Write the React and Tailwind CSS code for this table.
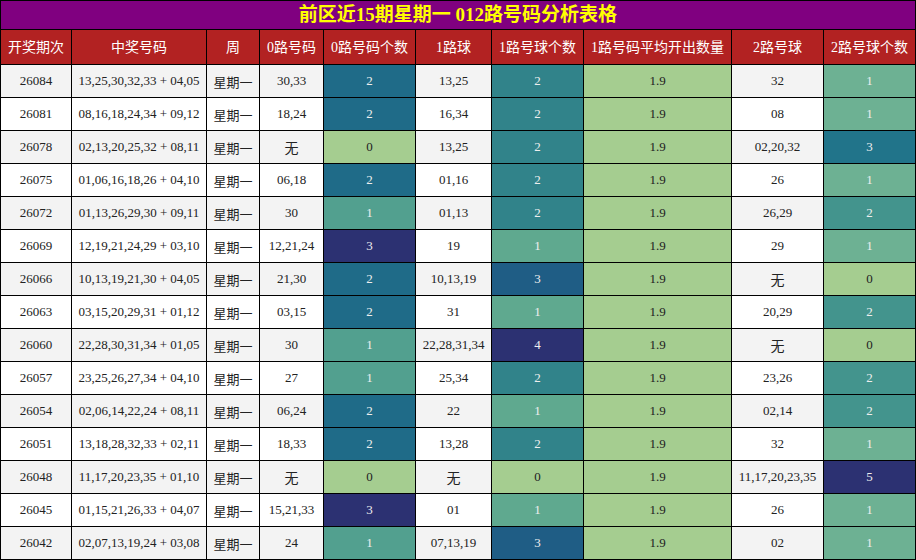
import React from 'react';

const rows = [
  ['26084', '13,25,30,32,33 + 04,05', '30,33', 2, '13,25', 2, '32', 1],
  ['26081', '08,16,18,24,34 + 09,12', '18,24', 2, '16,34', 2, '08', 1],
  ['26078', '02,13,20,25,32 + 08,11', '无', 0, '13,25', 2, '02,20,32', 3],
  ['26075', '01,06,16,18,26 + 04,10', '06,18', 2, '01,16', 2, '26', 1],
  ['26072', '01,13,26,29,30 + 09,11', '30', 1, '01,13', 2, '26,29', 2],
  ['26069', '12,19,21,24,29 + 03,10', '12,21,24', 3, '19', 1, '29', 1],
  ['26066', '10,13,19,21,30 + 04,05', '21,30', 2, '10,13,19', 3, '无', 0],
  ['26063', '03,15,20,29,31 + 01,12', '03,15', 2, '31', 1, '20,29', 2],
  ['26060', '22,28,30,31,34 + 01,05', '30', 1, '22,28,31,34', 4, '无', 0],
  ['26057', '23,25,26,27,34 + 04,10', '27', 1, '25,34', 2, '23,26', 2],
  ['26054', '02,06,14,22,24 + 08,11', '06,24', 2, '22', 1, '02,14', 2],
  ['26051', '13,18,28,32,33 + 02,11', '18,33', 2, '13,28', 2, '32', 1],
  ['26048', '11,17,20,23,35 + 01,10', '无', 0, '无', 0, '11,17,20,23,35', 5],
  ['26045', '01,15,21,26,33 + 04,07', '15,21,33', 3, '01', 1, '26', 1],
  ['26042', '02,07,13,19,24 + 03,08', '24', 1, '07,13,19', 3, '02', 1],
];

const headers = ['开奖期次', '中奖号码', '周', '0路号码', '0路号码个数', '1路球', '1路号球个数', '1路号码平均开出数量', '2路号球', '2路号球个数'];

// 每列单独的渐变色（浅绿 -> 深蓝）
const zero = 'bg-[#a5cd90] text-[#222]';
const heat0 = { 0: zero, 1: 'bg-[#52a08f] text-[#eee]', 2: 'bg-[#1f6b88] text-[#eee]', 3: 'bg-[#2c3172] text-[#eee]' };
const heat1 = { 0: zero, 1: 'bg-[#5fa98f] text-[#eee]', 2: 'bg-[#31838a] text-[#eee]', 3: 'bg-[#1f5d85] text-[#eee]', 4: 'bg-[#2c3172] text-[#eee]' };
const heat2 = { 0: zero, 1: 'bg-[#6db193] text-[#eee]', 2: 'bg-[#43948d] text-[#eee]', 3: 'bg-[#21748a] text-[#eee]', 5: 'bg-[#2c3172] text-[#eee]' };

const Cell = ({ className = '', children }) => (
  <div className={`flex items-center justify-center h-[32px] text-[13px] ${className}`}>{children}</div>
);

// "无" 比数字略低一点
const Text = ({ v }) => (v === '无' ? <span className="pt-[2px] text-[14px]">{v}</span> : v);

const App = () => {
  return (
    <div className="w-[916px] h-[560px] bg-black p-px font-['Liberation_Serif','Noto_Sans_CJK_SC',serif]">
      <div className="grid grid-cols-[70px_134px_52px_63px_91px_75px_91px_147px_91px_91px] gap-px">
        <div className="col-span-10 h-[28px] bg-[#800080] flex items-center justify-center text-[19px] font-bold text-[#ffff00]">
          前区近15期星期一 012路号码分析表格
        </div>
        {headers.map((h) => (
          <div key={h} className="h-[34px] bg-[#b22222] text-white text-[14px] flex items-center justify-center whitespace-nowrap">
            {h}
          </div>
        ))}
        {rows.map((r, i) => {
          const bg = i % 2 === 0 ? 'bg-[#f3f3f3]' : 'bg-white';
          const plain = `${bg} text-[#222]`;
          return (
            <React.Fragment key={r[0]}>
              <Cell className={plain}>{r[0]}</Cell>
              <Cell className={plain}>{r[1]}</Cell>
              <Cell className={`${plain} pt-[3px]`}>星期一</Cell>
              <Cell className={plain}><Text v={r[2]} /></Cell>
              <Cell className={heat0[r[3]]}>{r[3]}</Cell>
              <Cell className={plain}><Text v={r[4]} /></Cell>
              <Cell className={heat1[r[5]]}>{r[5]}</Cell>
              <Cell className="bg-[#a5cd90] text-[#222]">1.9</Cell>
              <Cell className={plain}><Text v={r[6]} /></Cell>
              <Cell className={heat2[r[7]]}>{r[7]}</Cell>
            </React.Fragment>
          );
        })}
      </div>
    </div>
  );
};

export default App;
